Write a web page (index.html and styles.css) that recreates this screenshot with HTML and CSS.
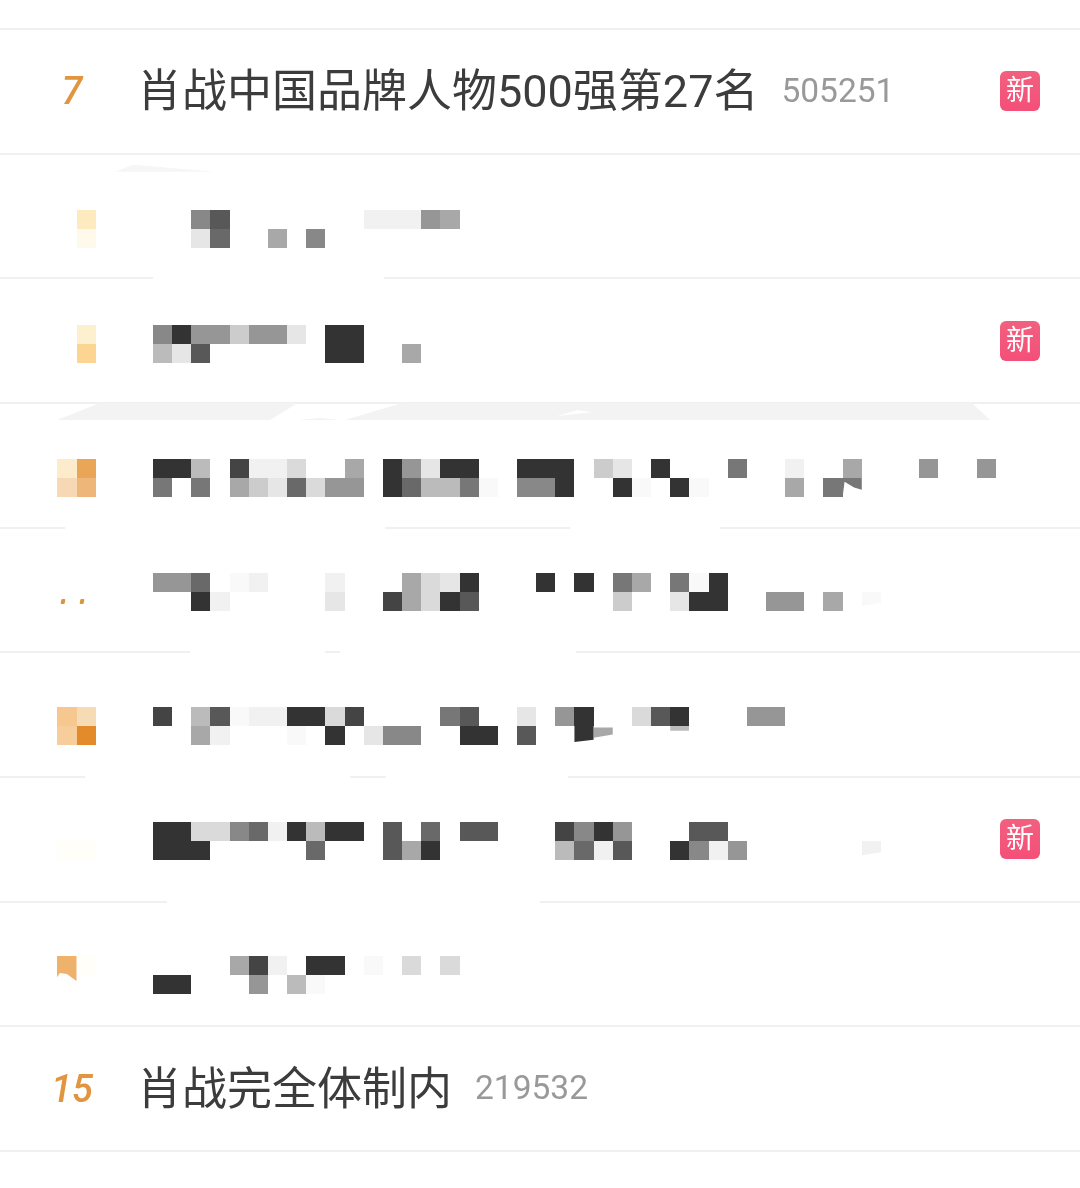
FILE: index.html
```html
<!DOCTYPE html>
<html lang="zh-CN">
<head>
<meta charset="utf-8">
<title>热搜榜</title>
<link rel="stylesheet" href="styles.css">
</head>
<body>
<main class="list">
  <div class="rule"></div>

  <section class="row">
    <span class="num">7</span>
    <span class="title">肖战中国品牌人物500强第27名</span>
    <span class="count">505251</span>
    <span class="badge">新</span>
  </section>
  <div class="rule"></div>

  <section class="row">
    <div class="ghost ghost-a"></div>
    <div class="censored at-55">
      <div class="swatch">
        <i></i><i class="o-pale"></i>
        <i></i><i class="o-faint"></i>
      </div>
      <div class="mosaic">
        <div class="line"><i></i><i></i><i class="g8"></i><i class="g5"></i><i></i><i></i><i></i><i></i><i></i><i></i><i></i><i class="gf"></i><i class="gf"></i><i class="gf"></i><i class="g9"></i><i class="ga"></i></div>
        <div class="line"><i></i><i></i><i class="ge"></i><i class="g6"></i><i></i><i></i><i class="ga"></i><i></i><i class="g8"></i></div>
      </div>
    </div>
  </section>
  <div class="rule rule-278"></div>

  <section class="row">
    <div class="censored at-46">
      <div class="swatch">
        <i></i><i class="o-cream"></i>
        <i></i><i class="o-sand"></i>
      </div>
      <div class="mosaic">
        <div class="line"><i class="g8"></i><i class="g3"></i><i class="g9"></i><i class="g9"></i><i class="gc"></i><i class="g9"></i><i class="g9"></i><i class="ge"></i><i></i><i class="g3"></i><i class="g3"></i></div>
        <div class="line"><i class="gb"></i><i class="ge"></i><i class="g5"></i><i></i><i></i><i></i><i></i><i></i><i></i><i class="g3"></i><i class="g3"></i><i></i><i></i><i class="ga"></i></div>
      </div>
    </div>
    <span class="badge">新</span>
  </section>
  <div class="rule"></div>

  <section class="row">
    <div class="ghost ghost-b"></div>
    <div class="ghost ghost-nick"></div>
    <div class="censored at-55">
      <div class="swatch">
        <i class="o-a"></i><i class="o-b"></i>
        <i class="o-c"></i><i class="o-d"></i>
      </div>
      <div class="mosaic">
        <div class="line"><i class="g3"></i><i class="g3"></i><i class="gb"></i><i></i><i class="g4"></i><i class="gf"></i><i class="gf"></i><i class="gd"></i><i></i><i></i><i class="ga"></i><i></i><i class="g3"></i><i class="g9"></i><i class="ge"></i><i class="g3"></i><i class="g3"></i><i></i><i></i><i class="g3"></i><i class="g3"></i><i class="g3"></i><i></i><i class="gc"></i><i class="ge"></i><i></i><i class="g3"></i><i></i><i></i><i></i><i class="g7"></i><i></i><i></i><i class="gf"></i><i></i><i></i><i class="ga"></i><i></i><i></i><i></i><i class="g9"></i><i></i><i></i><i class="g9"></i></div>
        <div class="line"><i class="g7"></i><i></i><i class="g7"></i><i></i><i class="ga"></i><i class="gc"></i><i class="ge"></i><i class="g6"></i><i class="gd"></i><i class="g9"></i><i class="g9"></i><i></i><i class="g3"></i><i class="g6"></i><i class="gb"></i><i class="gb"></i><i class="g7"></i><i class="gh"></i><i></i><i class="g8"></i><i class="g8"></i><i class="g3"></i><i></i><i></i><i class="g3"></i><i class="gh"></i><i></i><i class="g3"></i><i class="gh"></i><i></i><i></i><i></i><i></i><i class="ga"></i><i></i><i class="g7"></i><i class="g7 cut-curve"></i></div>
      </div>
    </div>
  </section>
  <div class="rule rule-527"></div>

  <section class="row">
    <div class="censored at-44">
      <div class="swatch">
        <i></i><i></i>
        <i><b class="tick"></b></i><i><b class="tick tick-r"></b></i>
      </div>
      <div class="mosaic">
        <div class="line"><i class="g9"></i><i class="g9"></i><i class="g6"></i><i></i><i class="gh"></i><i class="gf"></i><i></i><i></i><i></i><i class="gf"></i><i></i><i></i><i></i><i class="ga"></i><i class="gd"></i><i class="ge"></i><i class="g3"></i><i></i><i></i><i></i><i class="g3"></i><i></i><i class="g3"></i><i></i><i class="g7"></i><i class="ga"></i><i></i><i class="g7"></i><i class="gh"></i><i class="g3"></i></div>
        <div class="line"><i></i><i></i><i class="g3"></i><i class="gf"></i><i></i><i></i><i></i><i></i><i></i><i class="ge"></i><i></i><i></i><i class="g4"></i><i class="ga"></i><i class="gd"></i><i class="g3"></i><i class="g5"></i><i></i><i></i><i></i><i></i><i></i><i></i><i></i><i class="gc"></i><i></i><i></i><i class="ge"></i><i class="g3"></i><i class="g3"></i><i></i><i></i><i class="g9"></i><i class="g9"></i><i></i><i class="ga"></i><i></i><i class="gh cut-short"></i></div>
      </div>
    </div>
  </section>
  <div class="rule rule-652"></div>

  <section class="row">
    <div class="censored at-54">
      <div class="swatch">
        <i class="o-e"></i><i class="o-f"></i>
        <i class="o-g"></i><i class="o-h"></i>
      </div>
      <div class="mosaic">
        <div class="line"><i class="g4"></i><i></i><i class="gb"></i><i class="g5"></i><i class="gh"></i><i class="gf"></i><i class="gf"></i><i class="g3"></i><i class="g3"></i><i class="gd"></i><i class="g4"></i><i></i><i></i><i></i><i></i><i class="g7"></i><i class="g5"></i><i></i><i></i><i class="ge"></i><i></i><i class="g9"></i><i class="g3"></i><i></i><i></i><i class="gd"></i><i class="g5"></i><i class="g3"></i><i></i><i></i><i></i><i class="g9"></i><i class="g9"></i></div>
        <div class="line"><i></i><i></i><i class="ga"></i><i class="gf"></i><i></i><i></i><i></i><i class="gh"></i><i></i><i class="g3"></i><i></i><i class="ge"></i><i class="g8"></i><i class="g8"></i><i></i><i></i><i class="g3"></i><i class="g3"></i><i></i><i class="g5"></i><i></i><i></i><i class="g3 cut-slant"></i><i class="ga cut-tail"></i><i></i><i></i><i></i><i class="gb cut-sliver"></i></div>
      </div>
    </div>
  </section>
  <div class="rule rule-777"></div>

  <section class="row">
    <div class="censored at-44">
      <div class="swatch">
        <i></i><i></i>
        <i class="o-ivory"></i><i class="o-ivory"></i>
      </div>
      <div class="mosaic">
        <div class="line"><i class="g3"></i><i class="g3"></i><i class="gd"></i><i class="gd"></i><i class="g8"></i><i class="g6"></i><i class="gf"></i><i class="g3"></i><i class="gb"></i><i class="g3"></i><i class="g3"></i><i></i><i class="g5"></i><i></i><i class="g6"></i><i></i><i class="g5"></i><i class="g5"></i><i></i><i></i><i></i><i class="g4"></i><i class="g8"></i><i class="g3"></i><i class="g9"></i><i></i><i></i><i></i><i class="g5"></i><i class="g5"></i></div>
        <div class="line"><i class="g3"></i><i class="g3"></i><i class="g3"></i><i></i><i></i><i></i><i></i><i></i><i class="g6"></i><i></i><i></i><i></i><i class="g5"></i><i class="ga"></i><i class="g3"></i><i></i><i></i><i></i><i></i><i></i><i></i><i class="gb"></i><i class="g6"></i><i class="gf"></i><i class="g5"></i><i></i><i></i><i class="g3"></i><i class="g8"></i><i class="gf"></i><i class="g9"></i><i></i><i></i><i></i><i></i><i></i><i></i><i class="gf cut-short"></i></div>
      </div>
    </div>
    <span class="badge">新</span>
  </section>
  <div class="rule rule-901"></div>

  <section class="row">
    <div class="censored at-53">
      <div class="swatch">
        <i class="o-flag"></i><i class="o-ivory"></i>
        <i></i><i></i>
      </div>
      <div class="mosaic">
        <div class="line"><i></i><i></i><i></i><i></i><i class="ga"></i><i class="g4"></i><i class="gf"></i><i></i><i class="g3"></i><i class="g3"></i><i></i><i class="gh"></i><i></i><i class="gd"></i><i></i><i class="gd"></i></div>
        <div class="line"><i class="g3"></i><i class="g3"></i><i></i><i></i><i></i><i class="g9"></i><i></i><i class="gb"></i><i class="gh"></i></div>
      </div>
    </div>
  </section>
  <div class="rule"></div>

  <section class="row">
    <span class="num">15</span>
    <span class="title">肖战完全体制内</span>
    <span class="count">219532</span>
  </section>
  <div class="rule"></div>
</main>
</body>
</html>
```
FILE: styles.css
```css
* {
  box-sizing: border-box;
}

html,
body {
  margin: 0;
  height: 100%;
  background: #fff;
}

body {
  overflow: hidden;
  font-family: Roboto, "Noto Sans CJK SC", sans-serif;
}

.list {
  padding-top: 28px;
}

.rule {
  height: 2px;
  background: #f0f0f0;
}

.rule-278 {
  background: linear-gradient(90deg, #f0f0f0 0 153px, transparent 153px 384px, #f0f0f0 384px);
}

.rule-527 {
  background: linear-gradient(90deg, #f0f0f0 0 65px, transparent 65px 385px, #f0f0f0 385px 570px, transparent 570px 720px, #f0f0f0 720px);
}

.rule-652 {
  background: linear-gradient(90deg, #f0f0f0 0 190px, transparent 190px 325px, #f0f0f0 325px 340px, transparent 340px 576px, #f0f0f0 576px);
}

.rule-777 {
  background: linear-gradient(90deg, #f0f0f0 0 85px, transparent 85px 350px, #f0f0f0 350px 386px, transparent 386px 568px, #f0f0f0 568px);
}

.rule-901 {
  background: linear-gradient(90deg, #f0f0f0 0 167px, transparent 167px 540px, #f0f0f0 540px);
}

.row {
  position: relative;
  display: flex;
  align-items: center;
  height: 122.67px;
  padding-right: 40px;
}

.num {
  flex: none;
  width: 144px;
  margin-right: -7px;
  text-align: center;
  font-size: 38px;
  font-style: italic;
  font-weight: 500;
  color: #e2953f;
  filter: blur(0.3px);
}

.title {
  flex: none;
  margin-bottom: 7px;
  font-size: 45px;
  color: #3c3c3c;
  filter: blur(0.3px);
}

.count {
  flex: none;
  margin-left: 23px;
  margin-bottom: 2px;
  font-size: 33.5px;
  color: #999;
  filter: blur(0.3px);
}

.badge {
  flex: none;
  display: flex;
  align-items: center;
  justify-content: center;
  width: 40px;
  height: 40px;
  margin-left: auto;
  border-radius: 6px;
  background: linear-gradient(180deg, #f2607f, #f44f78);
  font-size: 28px;
  line-height: 1;
  color: #fff;
  filter: blur(0.3px);
}

.censored {
  display: flex;
  align-self: flex-start;
  padding-left: 57px;
}

.at-44 { margin-top: 44px; }
.at-46 { margin-top: 46px; }
.at-53 { margin-top: 53.3px; }
.at-54 { margin-top: 53.7px; }
.at-55 { margin-top: 55px; }

.swatch {
  display: grid;
  flex: none;
  grid-template-columns: 19.5px 19.5px;
  grid-template-rows: 19px 19px;
}

.swatch i {
  display: block;
}

.mosaic {
  flex: none;
  margin-left: 57px;
}

.line {
  display: flex;
  height: 19px;
}

.line i {
  flex: none;
  width: 19.17px;
  height: 19px;
}

.g3 { background: #333; }
.g4 { background: #444; }
.g5 { background: #585858; }
.g6 { background: #696969; }
.g7 { background: #777; }
.g8 { background: #888; }
.g9 { background: #969696; }
.ga { background: #a8a8a8; }
.gb { background: #bbb; }
.gc { background: #ccc; }
.gd { background: #dadada; }
.ge { background: #e6e6e6; }
.gf { background: #f1f1f1; }
.gh { background: #f9f9f9; }

.o-pale { background: #fdeabf; }
.o-faint { background: #fff9ec; }
.o-cream { background: #fdf0cf; }
.o-sand { background: #fcd593; }
.o-a { background: #fdeccb; }
.o-b { background: #e9a656; }
.o-c { background: #f6d9b4; }
.o-d { background: #eeb679; }
.o-e { background: #f6c88f; }
.o-f { background: #f6dbb5; }
.o-g { background: #f6cd9b; }
.o-h { background: #e38a2a; }
.o-ivory { background: #fffef8; }

.swatch .o-flag {
  height: 25px;
  background: #efb26c;
  clip-path: polygon(0 0, 100% 0, 100% 100%, 50% 72%, 15% 68%, 0 85%);
}

.tick {
  display: block;
  width: 4px;
  height: 5px;
  margin: 7px 0 0 4px;
  background: #d9963f;
  border-radius: 1px;
  transform: skewX(-10deg);
}

.tick-r {
  margin-left: 3px;
}

.line .cut-curve {
  clip-path: polygon(0 0, 100% 0, 100% 62%, 60% 50%, 10% 20%, 0 100%);
}

.line .cut-slant {
  clip-path: polygon(0 0, 100% 0, 100% 72%, 0 84%);
}

.line .cut-tail {
  clip-path: polygon(0 8%, 100% 8%, 100% 45%, 0 62%);
}

.line .cut-sliver {
  clip-path: polygon(0 0, 100% 0, 100% 25%, 0 25%);
}

.line .cut-short {
  clip-path: polygon(0 0, 100% 0, 100% 60%, 0 75%);
}

.ghost {
  position: absolute;
  background: #f3f3f3;
}

.ghost-a {
  top: 10px;
  left: 115px;
  width: 100px;
  height: 7px;
  background: #f6f6f6;
  clip-path: polygon(0 100%, 18% 0, 100% 100%);
}

.ghost-b {
  top: -1px;
  left: 57px;
  width: 933px;
  height: 17px;
  clip-path: polygon(0 100%, 43px 0, 240px 0, 228px 8px, 213px 100%, 241px 100%, 263px 15px, 283px 100%, 288px 100%, 345px 0, 915px 0, 933px 100%);
}

.ghost-nick {
  top: 6px;
  left: 557px;
  width: 35px;
  height: 6px;
  background: #fff;
  clip-path: polygon(0 100%, 60% 0, 100% 40%);
}
```
